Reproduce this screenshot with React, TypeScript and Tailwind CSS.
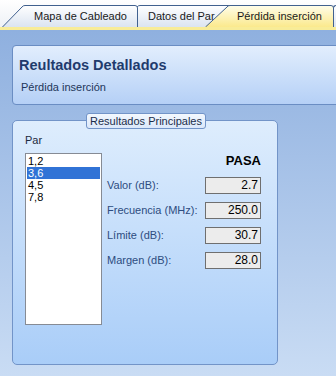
import React from "react";

const font = { fontFamily: '"Liberation Sans", Arial, sans-serif' };

function Tab({
  width,
  slant,
  active,
  className,
  label,
  textClass,
}: {
  width: number;
  slant: number;
  active?: boolean;
  className: string;
  label: string;
  textClass: string;
}) {
  const h = 22;
  const fill = `M0,${h} L${slant - 1},2 Q${slant},0.5 ${slant + 2},0.5 L${width - 3},0.5 Q${width - 0.5},0.5 ${width - 0.5},3 L${width - 0.5},${h} Z`;
  const edge = `M0.5,${h} L${slant - 1},2 Q${slant},0.5 ${slant + 2},0.5 L${width - 3},0.5 Q${width - 0.5},0.5 ${width - 0.5},3 L${width - 0.5},${h}`;
  return (
    <div className={`relative h-[22px] shrink-0 ${className}`}>
      <svg className="absolute inset-0" width={width} height={h} viewBox={`0 0 ${width} ${h}`}>
        <path d={fill} fill={active ? "url(#tabActive)" : "url(#tabIdle)"} />
        <path d={edge} fill="none" stroke="#41618f" strokeWidth="1" />
      </svg>
      <span className={`relative block whitespace-nowrap text-[11px] leading-[22px] text-[#1a1a1a] ${textClass}`}>
        {label}
      </span>
    </div>
  );
}

const rows = [
  { label: "Valor (dB):", value: "2.7" },
  { label: "Frecuencia (MHz):", value: "250.0" },
  { label: "Límite (dB):", value: "30.7" },
  { label: "Margen (dB):", value: "28.0" },
];

const pairs = ["1,2", "3,6", "4,5", "7,8"];

export default function App() {
  return (
    <div className="relative h-[376px] w-[336px] overflow-hidden" style={font}>
      <svg width="0" height="0" className="absolute">
        <defs>
          <linearGradient id="tabIdle" x1="0" y1="0" x2="0" y2="1">
            <stop offset="0" stopColor="#ffffff" />
            <stop offset="1" stopColor="#dbe4f1" />
          </linearGradient>
          <linearGradient id="tabActive" x1="0" y1="0" x2="0" y2="1">
            <stop offset="0" stopColor="#fffdea" />
            <stop offset="1" stopColor="#fbe98c" />
          </linearGradient>
        </defs>
      </svg>

      {/* tab strip */}
      <div className="flex h-[27px] items-end bg-linear-to-b from-[#ffffff] to-[#eef1f6] pl-[2px]">
        <Tab width={136} slant={21} className="z-20 w-[136px]" label="Mapa de Cableado" textClass="pl-[32px]" />
        <Tab width={115} slant={20} className="z-10 -ml-[20px] w-[115px]" label="Datos del Par" textClass="pl-[30px]" />
        <Tab width={129} slant={23} active className="z-30 -ml-[28px] w-[129px]" label="Pérdida inserción" textClass="pl-[32px]" />
        <div className="z-0 -ml-[1px] h-[22px] w-[40px] shrink-0 rounded-tl-[3px] border-l border-t border-[#41618f] bg-linear-to-b from-[#ffffff] to-[#dbe4f1]" />
      </div>
      <div className="h-[3px] bg-[#f8ec98]" />

      {/* body */}
      <div className="h-[346px] bg-linear-to-b from-[#8fb0df] to-[#c9dcf4] pl-[12px] pt-[15px]">
        <div className="-mr-[10px] h-[60px] rounded-l-[4px] border border-[#6a8dc3] bg-linear-to-b from-[#e2eefd] to-[#b5d0f6] pl-[6px] pt-[10px]">
          <div className="text-[14.5px] font-bold leading-[18px] text-[#1f3b6d]">Reultados Detallados</div>
          <div className="mt-[6px] pl-[2px] text-[11px] leading-[14px] text-[#22365a]">Pérdida inserción</div>
        </div>

        <div className="relative mt-[15px] h-[245px] w-[266px] rounded-[5px] border border-[#7294c8] bg-linear-to-b from-[#deedfd] to-[#a9cdf8] pl-[12px] pt-[11px]">
          <div className="absolute -top-[8px] left-[73px] flex h-[16px] w-[120px] items-center justify-center rounded-[3px] border border-[#7294c8] bg-linear-to-b from-[#f3f8fe] to-[#dbe8fa] text-[11px] text-[#1b2d4a]">
            Resultados Principales
          </div>

          <div className="h-[16px] text-[11px] leading-[16px] text-[#1c2a40]">Par</div>

          <div className="mt-[5px] flex items-start">
            <div className="h-[172px] w-[77px] border border-[#868b94] bg-white p-[1px]">
              {pairs.map((p) => (
                <div
                  key={p}
                  className={`h-[12px] overflow-hidden pl-[1px] text-[11px] leading-[12px] ${
                    p === "3,6" ? "bg-[#3173d6] text-white" : "text-black"
                  }`}
                >
                  {p}
                </div>
              ))}
            </div>

            <div className="ml-[5px] w-[154px]">
              <div className="h-[16px] text-right text-[13px] font-bold leading-[16px] text-black">PASA</div>
              <div className="mt-[8px] flex flex-col gap-[8px]">
                {rows.map((r) => (
                  <div key={r.label} className="flex h-[17px] items-center justify-between">
                    <span className="text-[11px] text-[#2d4c80]">{r.label}</span>
                    <div className="h-[17px] w-[56px] border border-[#6f6f6f] bg-[#ececec] pr-[2px] text-right text-[12px] leading-[15px] text-black">
                      {r.value}
                    </div>
                  </div>
                ))}
              </div>
            </div>
          </div>
        </div>
      </div>
    </div>
  );
}
